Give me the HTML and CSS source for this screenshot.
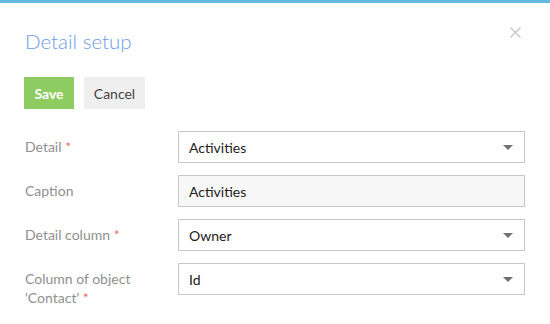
FILE: index.html
```html
<!DOCTYPE html>
<html lang="en">
<head>
    <title>Detail setup</title>
    <meta charset="utf-8">
    <link rel="stylesheet" href="styles.css">
</head>
<body>
<div class="top-line"></div>
<div class="dialog">
    <div class="dialog-header">
        <h1 class="dialog-title">Detail setup</h1>
        <button class="close" type="button" aria-label="Close">
            <svg width="11" height="11" viewBox="0 0 11 11">
                <path d="M0.5 0.5 L10.5 10.5 M10.5 0.5 L0.5 10.5" stroke="#c4c4c4" stroke-width="1.2" fill="none"/>
            </svg>
        </button>
    </div>
    <div class="actions">
        <button class="button button-green" type="button">Save</button>
        <button class="button button-gray" type="button">Cancel</button>
    </div>
    <div class="form">
        <div class="row">
            <span class="label">Detail <span class="required">*</span></span>
            <div class="field">
                <span class="value">Activities</span>
                <span class="caret"></span>
            </div>
        </div>
        <div class="row">
            <span class="label">Caption</span>
            <div class="field field-readonly">
                <span class="value">Activities</span>
            </div>
        </div>
        <div class="row">
            <span class="label">Detail column <span class="required">*</span></span>
            <div class="field">
                <span class="value">Owner</span>
                <span class="caret"></span>
            </div>
        </div>
        <div class="row">
            <span class="label">Column of object<br>'Contact' <span class="required">*</span></span>
            <div class="field">
                <span class="value">Id</span>
                <span class="caret"></span>
            </div>
        </div>
    </div>
</div>
</body>
</html>
```

FILE: styles.css
```css
*, *::before, *::after {
    margin: 0;
    padding: 0;
    box-sizing: border-box;
}

body {
    background-color: #ffffff;
    color: #333333;
    font-family: "Lato", sans-serif;
    font-size: 14px;
}

.top-line {
    height: 3px;
    background-color: #64b9e2;
}

.dialog {
    padding: 0 25px 0 24px;
}

.dialog-header {
    display: flex;
    justify-content: space-between;
    align-items: flex-start;
    height: 74px;
    padding-top: 24px;
}

.dialog-title {
    font-size: 20.5px;
    font-weight: 300;
    line-height: 28px;
    color: #6b9de6;
    margin-left: 1px;
}

.close {
    display: block;
    border: none;
    background: transparent;
    margin-top: 0;
    margin-right: 4px;
    cursor: pointer;
}

.close svg {
    display: block;
}

.actions {
    display: flex;
    gap: 10px;
    margin-bottom: 22px;
}

.button {
    height: 32px;
    border: none;
    padding: 0;
    font-family: inherit;
    font-size: 14px;
    cursor: pointer;
}

.button-green {
    width: 50px;
    background-color: #8ecc62;
    color: #ffffff;
    font-weight: 700;
}

.button-gray {
    width: 61px;
    background-color: #efefef;
    color: #444444;
}

.form {
    display: flex;
    flex-direction: column;
    gap: 12px;
}

.row {
    display: flex;
    align-items: flex-start;
}

.label {
    width: 154px;
    padding-left: 1px;
    padding-top: 6px;
    line-height: 19px;
    color: #8f8f8f;
}

.required {
    color: #e8716b;
}

.field {
    flex: 1;
    display: flex;
    align-items: center;
    justify-content: space-between;
    height: 32px;
    border: 1px solid #c8c8c8;
    padding: 0 11px 0 10px;
    color: #222222;
    background-color: #ffffff;
}

.field-readonly {
    background-color: #f7f7f7;
}

.caret {
    width: 0;
    height: 0;
    border-left: 5px solid transparent;
    border-right: 5px solid transparent;
    border-top: 5px solid #707070;
}
```
